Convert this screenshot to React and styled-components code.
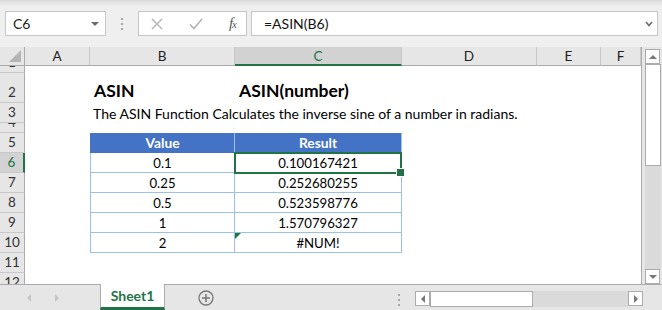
import styled, { createGlobalStyle, css } from 'styled-components';

const GREEN = '#217346';

const GlobalStyle = createGlobalStyle`
  html, body { margin: 0; padding: 0; }
  body {
    width: 662px;
    height: 310px;
    overflow: hidden;
    font-family: 'Lato', 'Liberation Sans', sans-serif;
  }
  * { box-sizing: border-box; }
`;

const COLS = ['A', 'B', 'C', 'D', 'E', 'F'];
const ROW_HEIGHTS = [7, 30, 20, 10, 20, 20, 20, 20, 20, 20, 20, 20];

const CELLS = {
  B2: { v: 'ASIN', kind: 'title' },
  C2: { v: 'ASIN(number)', kind: 'title' },
  B3: { v: 'The ASIN Function Calculates the inverse sine of a number in radians.', kind: 'text' },
  B5: { v: 'Value', kind: 'head' },
  C5: { v: 'Result', kind: 'head' },
  B6: { v: '0.1' },
  C6: { v: '0.100167421', selected: true },
  B7: { v: '0.25' },
  C7: { v: '0.252680255' },
  B8: { v: '0.5' },
  C8: { v: '0.523598776' },
  B9: { v: '1' },
  C9: { v: '1.570796327' },
  B10: { v: '2' },
  C10: { v: '#NUM!', error: true },
};

const Window = styled.div`
  width: 662px;
  height: 310px;
  display: flex;
  flex-direction: column;
  background: #e6e6e6;
`;

/* formula bar */
const FormulaBar = styled.div`
  height: 47px;
  flex: none;
  display: flex;
  align-items: flex-start;
  padding: 11px 4px 0 5px;
  background: linear-gradient(#d9d9d9 0, #efefef 6px, #efefef 100%);
`;

const Box = styled.div`
  height: 25px;
  display: flex;
  align-items: center;
  background: #fff;
  border: 1px solid #c6c6c6;
`;

const NameBox = styled(Box)`
  width: 101px;
  padding: 0 6px 0 7px;
  justify-content: space-between;
  font-size: 14px;
  color: #222;
`;

const Grip = styled.div`
  width: 3px;
  display: flex;
  flex-direction: column;
  gap: 3px;
  margin: ${p => p.$margin};

  span {
    width: 2px;
    height: 2px;
    background: #a8a8a8;
  }
`;

const FxButtons = styled(Box)`
  width: 109px;
  padding: 0 10px 0 12px;
  justify-content: space-between;
`;

const Fx = styled.span`
  font-family: 'Liberation Serif', serif;
  font-style: italic;
  font-size: 15px;
  color: #5a5a5a;
  letter-spacing: -1px;

  small {
    font-size: 11px;
  }
`;

const FormulaInput = styled(Box)`
  flex: 1;
  margin-left: 4px;
  padding: 0 4px 0 12px;
  justify-content: space-between;
  font-size: 14px;
  color: #111;
`;

/* sheet */
const Main = styled.div`
  height: 237px;
  flex: none;
  display: flex;
`;

const Sheet = styled.div`
  width: 642px;
  height: 237px;
  overflow: hidden;
  display: grid;
  grid-template-columns: 25px 65px 145px 167px 135px 64px 1fr;
  grid-template-rows: 19px ${ROW_HEIGHTS.map(h => `${h}px`).join(' ')};
  align-content: start;
  background: #fff;
  border-right: 1px solid #ababab;
`;

const Corner = styled.div`
  position: relative;
  background: #e6e6e6;
  border-right: 1px solid #ababab;
  border-bottom: 1px solid #ababab;

  &::after {
    content: '';
    position: absolute;
    right: 3px;
    bottom: 3px;
    border-left: 12px solid transparent;
    border-bottom: 12px solid #b4b4b4;
  }
`;

const ColHeader = styled.div`
  display: flex;
  align-items: center;
  justify-content: center;
  font-size: 13.5px;
  color: #222;
  background: #e6e6e6;
  border-right: 1px solid #c8c8c8;
  border-bottom: 1px solid #ababab;

  ${p => p.$selected && css`
    background: #d2d2d2;
    color: ${GREEN};
    border-bottom: 2px solid ${GREEN};
  `}
`;

const RowHeader = styled.div`
  display: flex;
  align-items: flex-end;
  justify-content: center;
  overflow: hidden;
  padding-bottom: 3px;
  font-size: 13.5px;
  line-height: 14px;
  color: #333;
  background: #e6e6e6;
  border-right: 1px solid #ababab;
  border-bottom: 1px solid #c8c8c8;

  ${p => p.$selected && css`
    background: #d2d2d2;
    color: ${GREEN};
    border-right: 2px solid ${GREEN};
  `}
`;

const Cell = styled.div`
  position: relative;
  min-width: 0;
  display: flex;
  align-items: flex-end;
  padding: 0 3px 1px;
  white-space: nowrap;
  font-size: 14px;
  line-height: 16px;
  color: #000;

  ${p => p.$table && css`
    justify-content: center;
    font-size: 13.2px;
    border-right: 1px solid #9bc2e6;
    border-bottom: 1px solid #9bc2e6;
  `}
  ${p => p.$table && p.$first && css`
    border-left: 1px solid #9bc2e6;
  `}
  ${p => p.$kind === 'head' && css`
    background: #4472c4;
    color: #fff;
    font-size: 13.8px;
    font-weight: 700;
    border-bottom-color: #4472c4;
    border-left-color: #4472c4;
  `}
  ${p => p.$kind === 'title' && css`
    padding-left: 4px;
    padding-bottom: 2px;
    font-size: 17.5px;
    font-weight: 700;
    line-height: 20px;
  `}
`;

const Selection = styled.span`
  position: absolute;
  top: -1px;
  left: -1px;
  right: -1px;
  bottom: -2px;
  border: 2px solid ${GREEN};
  z-index: 2;

  &::after {
    content: '';
    position: absolute;
    right: -5px;
    bottom: -5px;
    width: 7px;
    height: 7px;
    background: ${GREEN};
    border: 1px solid #fff;
  }
`;

const ErrorMark = styled.span`
  position: absolute;
  top: 0;
  left: 0;
  border-top: 6px solid #1f7a3a;
  border-right: 6px solid transparent;
`;

/* scroll bars */
const VScroll = styled.div`
  width: 20px;
  display: flex;
  flex-direction: column;
  padding: 2px 1px 0 3px;
  background: #e6e6e6;
`;

const ScrollButton = styled.div`
  width: 15px;
  height: 15px;
  flex: none;
  display: flex;
  align-items: center;
  justify-content: center;
  background: #fff;
  border: 1px solid #ababab;
`;

const Thumb = styled.div`
  flex: none;
  background: #fff;
  border: 1px solid #ababab;
  ${p => p.$vertical ? css`height: 102px;` : css`width: 103px;`}
`;

const Track = styled.div`
  flex: 1;
  background: #dadada;
`;

/* sheet tabs */
const BottomBar = styled.div`
  flex: 1;
  display: flex;
  align-items: stretch;
  border-top: 1px solid #ababab;
  background: #e6e6e6;
`;

const TabNav = styled.div`
  width: 100px;
  display: flex;
  align-items: center;
  gap: 24px;
  padding-left: 27px;
`;

const Tab = styled.div`
  width: 65px;
  margin-top: -1px;
  display: flex;
  align-items: center;
  justify-content: center;
  background: #fff;
  border-left: 1px solid #ababab;
  border-right: 1px solid #ababab;
  border-bottom: 3px solid ${GREEN};
  font-size: 14px;
  font-weight: 700;
  color: ${GREEN};
`;

const AddSheet = styled.div`
  margin-left: 33px;
  display: flex;
  align-items: center;
`;

const Spacer = styled.div`
  flex: 1;
`;

const HScroll = styled.div`
  width: 228px;
  margin: 6px 19px 3px 0;
  display: flex;
`;

const Tri = ({ dir, size = 4, color = '#777' }) => {
  const pts = {
    up: `0,${size} ${size * 2},${size} ${size},0`,
    down: `0,0 ${size * 2},0 ${size},${size}`,
    left: `${size},0 ${size},${size * 2} 0,${size}`,
    right: `0,0 0,${size * 2} ${size},${size}`,
  }[dir];
  const vertical = dir === 'up' || dir === 'down';
  return (
    <svg width={vertical ? size * 2 : size} height={vertical ? size : size * 2}>
      <polygon points={pts} fill={color} />
    </svg>
  );
};

export default function App() {
  return (
    <>
      <GlobalStyle />
      <Window>
        <FormulaBar>
          <NameBox>
            <span>C6</span>
            <Tri dir="down" size={4} color="#6d6d6d" />
          </NameBox>
          <Grip $margin="7px 14px 0 15px">
            <span /><span /><span />
          </Grip>
          <FxButtons>
            <svg width="12" height="12" viewBox="0 0 12 12">
              <path d="M1 1 L11 11 M11 1 L1 11" stroke="#b3b3b3" strokeWidth="1.4" fill="none" />
            </svg>
            <svg width="14" height="12" viewBox="0 0 14 12">
              <path d="M1 6.5 L5 10.5 L13 1" stroke="#b3b3b3" strokeWidth="1.6" fill="none" />
            </svg>
            <Fx>f<small>x</small></Fx>
          </FxButtons>
          <FormulaInput>
            <span>=ASIN(B6)</span>
            <svg width="8" height="6" viewBox="0 0 8 6">
              <path d="M1 1 L4 4.5 L7 1" stroke="#6d6d6d" strokeWidth="1.6" fill="none" />
            </svg>
          </FormulaInput>
        </FormulaBar>

        <Main>
          <Sheet>
            <Corner />
            {COLS.map(c => (
              <ColHeader key={c} $selected={c === 'C'}>{c}</ColHeader>
            ))}
            {ROW_HEIGHTS.map((_, i) => {
              const r = i + 1;
              return [
                <RowHeader key={`r${r}`} $selected={r === 6}>{r}</RowHeader>,
                ...COLS.map(c => {
                  const cell = CELLS[`${c}${r}`];
                  const inTable = (c === 'B' || c === 'C') && r >= 5 && r <= 10;
                  return (
                    <Cell
                      key={`${c}${r}`}
                      $table={inTable}
                      $first={c === 'B'}
                      $kind={cell?.kind}
                    >
                      {cell?.v}
                      {cell?.error && <ErrorMark />}
                      {cell?.selected && <Selection />}
                    </Cell>
                  );
                }),
              ];
            })}
          </Sheet>
          <VScroll>
            <ScrollButton><Tri dir="up" /></ScrollButton>
            <Thumb $vertical />
            <Track />
            <ScrollButton><Tri dir="down" /></ScrollButton>
          </VScroll>
        </Main>

        <BottomBar>
          <TabNav>
            <Tri dir="left" color="#c4c4c4" />
            <Tri dir="right" color="#c4c4c4" />
          </TabNav>
          <Tab>Sheet1</Tab>
          <AddSheet>
            <svg width="16" height="16" viewBox="0 0 16 16">
              <circle cx="8" cy="8" r="7" stroke="#777" strokeWidth="1.3" fill="none" />
              <path d="M8 4 V12 M4 8 H12" stroke="#777" strokeWidth="1.5" />
            </svg>
          </AddSheet>
          <Spacer />
          <Grip $margin="9px 14px 0 0">
            <span /><span /><span />
          </Grip>
          <HScroll>
            <ScrollButton><Tri dir="left" /></ScrollButton>
            <Thumb />
            <Track />
            <ScrollButton><Tri dir="right" /></ScrollButton>
          </HScroll>
        </BottomBar>
      </Window>
    </>
  );
}
